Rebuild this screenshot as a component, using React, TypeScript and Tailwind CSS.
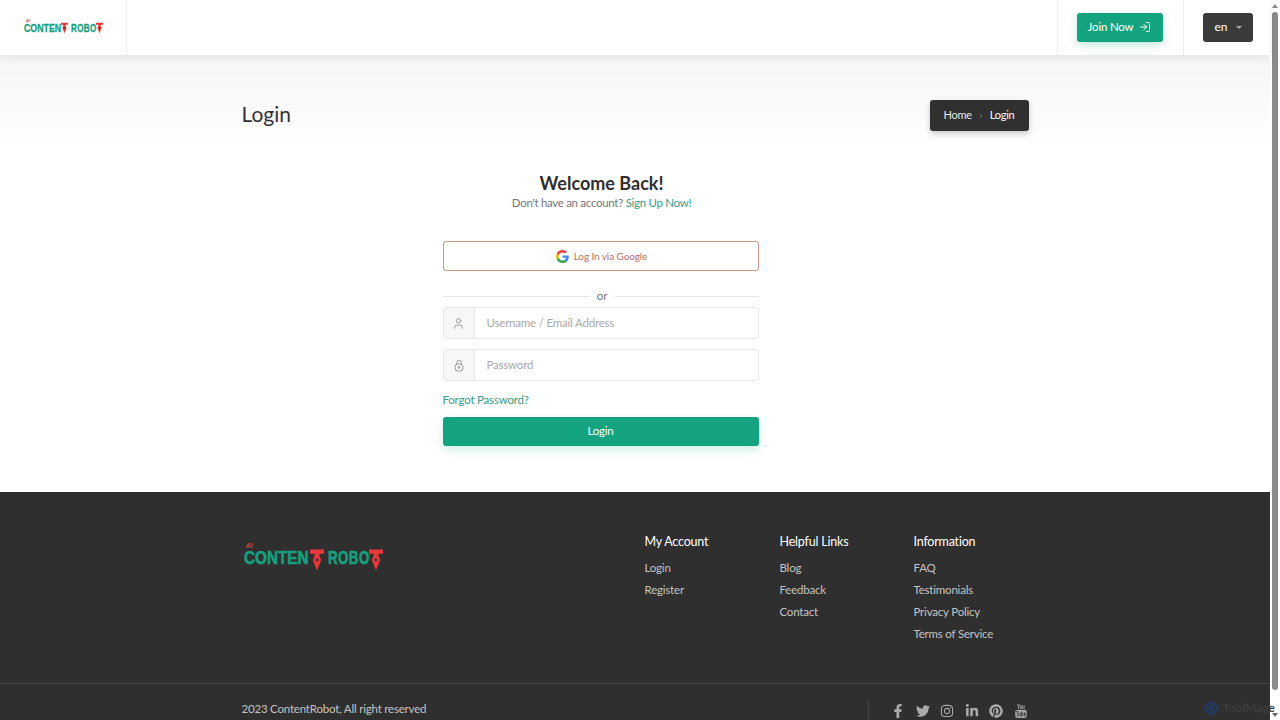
import { ChevronRight, LogIn, User } from "lucide-react";
import {
  FaFacebookF,
  FaInstagram,
  FaLinkedinIn,
  FaPinterest,
  FaTwitter,
} from "react-icons/fa";
import { TfiYoutube } from "react-icons/tfi";

const font = "font-['Lato','Noto_Sans',sans-serif]";

function Nib({ className }: { className: string }) {
  return (
    <svg viewBox="0 0 20 30" className={className}>
      <path d="M0 0h20v6h-6l-1 2 3 7-6 15-6-15 3-7-1-2H0z" fill="#e8393a" />
      <circle cx="10" cy="15" r="2" fill="#2f2f2f" />
    </svg>
  );
}

function Logo({ big }: { big?: boolean }) {
  if (big) {
    return (
      <div className="relative flex items-start font-['Liberation_Sans',sans-serif] font-bold text-[#14a07e]">
        <span className="absolute left-[2px] top-[-7px] text-[7px] italic leading-none text-[#e8393a]">AI</span>
        <span className="w-[66px] origin-left scale-x-[0.85] whitespace-nowrap text-[18px] leading-[18px] [-webkit-text-stroke:0.6px_#14a07e]">
          CONTEN
        </span>
        <Nib className="h-[22px] w-[14px]" />
        <span className="ml-[4px] w-[41px] origin-left scale-x-[0.74] whitespace-nowrap text-[18px] leading-[18px] tracking-[0.6px] [-webkit-text-stroke:0.6px_#14a07e]">
          ROBO
        </span>
        <Nib className="h-[22px] w-[14px]" />
      </div>
    );
  }
  return (
    <div className="relative flex items-start font-['Liberation_Sans',sans-serif] font-bold text-[#14a07e]">
      <span className="absolute left-[2px] top-[-3px] text-[4px] italic leading-none text-[#e8393a]">AI</span>
      <span className="w-[37px] origin-left scale-x-[0.8] whitespace-nowrap text-[11px] leading-[12px] [-webkit-text-stroke:0.3px_#14a07e]">
        CONTEN
      </span>
      <Nib className="h-[12px] w-[7px]" />
      <span className="ml-[3px] w-[25px] origin-left scale-x-[0.74] whitespace-nowrap text-[11px] leading-[12px] tracking-[0.4px] [-webkit-text-stroke:0.3px_#14a07e]">
        ROBO
      </span>
      <Nib className="h-[12px] w-[7px]" />
    </div>
  );
}

function GoogleIcon() {
  return (
    <svg viewBox="0 0 48 48" className="h-[13px] w-[13px]">
      <path fill="#EA4335" d="M24 9.5c3.5 0 6.7 1.2 9.2 3.6l6.9-6.9C35.9 2.4 30.5 0 24 0 14.6 0 6.5 5.4 2.6 13.2l8 6.2C12.5 13.7 17.8 9.5 24 9.5z" />
      <path fill="#4285F4" d="M47 24.5c0-1.6-.1-3.1-.4-4.5H24v9h12.9c-.6 3-2.2 5.5-4.8 7.2l7.7 6c4.5-4.2 7.2-10.3 7.2-17.7z" />
      <path fill="#FBBC05" d="M10.6 28.6c-.5-1.4-.8-3-.8-4.6s.3-3.2.8-4.6l-8-6.2C.9 16.5 0 20.1 0 24s.9 7.5 2.6 10.8l8-6.2z" />
      <path fill="#34A853" d="M24 48c6.5 0 11.9-2.1 15.9-5.8l-7.7-6c-2.2 1.5-4.9 2.3-8.2 2.3-6.2 0-11.5-4.2-13.4-9.9l-8 6.2C6.5 42.6 14.6 48 24 48z" />
    </svg>
  );
}

function LockIcon() {
  return (
    <svg viewBox="0 0 16 20" className="h-[13px] w-[10px]" fill="none" stroke="#8a8a8a" strokeWidth="1.4">
      <path d="M4.5 8V5a3.5 3.5 0 0 1 7 0v3" />
      <rect x="1.5" y="7.5" width="13" height="11.5" rx="5.5" />
      <circle cx="8" cy="13" r="1.6" />
    </svg>
  );
}

function Field({ icon, placeholder }: { icon: React.ReactNode; placeholder: string }) {
  return (
    <div className="flex h-[32px] overflow-hidden rounded-[3px] border border-[#e9e9e9] bg-white">
      <div className="flex w-[31px] items-center justify-center border-r border-[#e9e9e9] bg-[#f7f7f7]">
        {icon}
      </div>
      <div className="flex flex-1 items-center pb-[1px] pl-[12px] text-[11.5px] tracking-[-0.2px] text-[#a9a9a9]">{placeholder}</div>
    </div>
  );
}

function FooterCol({ title, links, width }: { title: string; links: string[]; width: string }) {
  return (
    <div className={width}>
      <h4 className="pt-[1px] text-[12.5px] leading-[18px] tracking-[-0.2px] text-white">{title}</h4>
      <ul className="mt-[6px] flex flex-col text-[11.5px] leading-[22px] tracking-[-0.2px] text-[#c4c4c4]">
        {links.map((l) => (
          <li key={l}>{l}</li>
        ))}
      </ul>
    </div>
  );
}

export default function App() {
  return (
    <div className={`relative flex h-screen overflow-hidden bg-white ${font}`}>
      <div className="min-w-0 flex-1">
        <header className="relative z-10 flex h-[55px] bg-white shadow-[0_2px_8px_rgba(0,0,0,0.08)]">
          <div className="flex w-[127px] items-center border-r border-[#ececec] pl-[24px]">
            <Logo />
          </div>
          <div className="flex-1" />
          <div className="flex w-[126px] items-center justify-center border-l border-[#ececec] pr-[2px]">
            <button className="flex h-[29px] w-[86px] items-center justify-center gap-[6px] rounded-[3px] bg-[#13a37e] pb-[1px] text-[11.5px] tracking-[-0.2px] text-white shadow-[0_3px_8px_rgba(19,163,126,0.25)]">
              Join Now <LogIn size={12} />
            </button>
          </div>
          <div className="flex w-[87px] items-center border-l border-[#ececec] pl-[19px]">
            <button className="flex h-[29px] w-[50px] items-center justify-center gap-[8px] rounded-[3px] bg-[#3a3a3a] pb-[1px] text-[12px] text-white">
              en <span className="h-0 w-0 border-x-[3px] border-t-[3px] border-x-transparent border-t-[#aaaaaa]" />
            </button>
          </div>
        </header>

        <div className="h-[95px] bg-gradient-to-b from-[#f5f5f5] to-white">
          <div className="mx-auto flex w-[787px] items-start justify-between pt-[45px]">
            <h1 className="text-[21px] leading-[28px] text-[#333333]">Login</h1>
            <nav className="flex h-[31px] w-[99px] items-center justify-center gap-[5px] rounded-[3px] bg-[#303030] text-[11px] tracking-[-0.25px] text-white shadow-[0_3px_6px_rgba(0,0,0,0.2)]">
              <span className="text-[#e8e8e8]">Home</span>
              <ChevronRight size={8} className="text-[#888888]" />
              <span>Login</span>
            </nav>
          </div>
        </div>

        <div className="mx-auto h-[342px] w-[787px] pl-[201px]">
          <main className="w-[316px] pt-[21px]">
            <div className="pl-[2px] text-center">
              <h2 className="text-[18px] font-bold leading-[24px] text-[#2f2f2f]">Welcome Back!</h2>
              <p className="text-[11.5px] leading-[16px] tracking-[-0.3px] text-[#777777]">
                Don't have an account? <a className="text-[#3b9c86]">Sign Up Now!</a>
              </p>
            </div>
            <button className="mt-[30px] flex h-[30px] w-full items-center justify-center gap-[5px] rounded-[3px] border border-[#c9978d] pl-[2px] text-[10px] tracking-[-0.1px] text-[#bb6f68]">
              <GoogleIcon /> Log In via Google
            </button>
            <div className="mt-[17px] flex items-center gap-[7px] text-[11.5px] leading-[16px] text-[#777777]">
              <span className="h-px flex-1 bg-[#e6e6e6]" />
              or
              <span className="h-px w-[144px] bg-[#e6e6e6]" />
            </div>
            <div className="mt-[3px] flex flex-col gap-[10px]">
              <Field icon={<User size={13} strokeWidth={1.5} className="text-[#8a8a8a]" />} placeholder="Username / Email Address" />
              <Field icon={<LockIcon />} placeholder="Password" />
            </div>
            <a className="mt-[11px] block text-[11.5px] leading-[16px] tracking-[-0.2px] text-[#3b9c86]">Forgot Password?</a>
            <button className="mt-[9px] h-[29px] w-full rounded-[3px] bg-[#13a37e] pb-[1px] text-[11.5px] tracking-[-0.2px] text-white shadow-[0_4px_10px_rgba(19,163,126,0.2)]">
              Login
            </button>
          </main>
        </div>

        <footer className="h-[228px] bg-[#2f2f2f]">
          <div className="mx-auto flex w-[787px] pt-[40px]">
            <div className="w-[403px] pl-[2px] pt-[17px]">
              <Logo big />
            </div>
            <FooterCol title="My Account" width="w-[135px]" links={["Login", "Register"]} />
            <FooterCol title="Helpful Links" width="w-[134px]" links={["Blog", "Feedback", "Contact"]} />
            <FooterCol title="Information" width="w-[115px]" links={["FAQ", "Testimonials", "Privacy Policy", "Terms of Service"]} />
          </div>
          <div className="mt-[38px] border-t border-[#444444]">
            <div className="mx-auto flex w-[787px] justify-between pt-[16px]">
              <p className="text-[11.5px] leading-[18px] tracking-[-0.2px] text-[#c4c4c4]">2023 ContentRobot, All right reserved</p>
              <div className="flex h-[24px] w-[161px] items-start gap-[9.6px] border-l border-[#444444] pl-[22px] pt-[4px] text-[14px] text-[#aaaaaa]">
                <span className="flex w-[15px] shrink-0 justify-center"><FaFacebookF /></span>
                <span className="flex w-[15px] shrink-0 justify-center"><FaTwitter /></span>
                <span className="flex w-[15px] shrink-0 justify-center"><FaInstagram /></span>
                <span className="flex w-[15px] shrink-0 justify-center"><FaLinkedinIn /></span>
                <span className="flex w-[15px] shrink-0 justify-center"><FaPinterest /></span>
                <span className="flex w-[15px] shrink-0 justify-center"><TfiYoutube /></span>
              </div>
            </div>
          </div>
        </footer>
      </div>

      <div className="flex w-[10px] flex-col items-center bg-white">
        <span className="mt-[4px] h-0 w-0 border-x-[3px] border-b-[4px] border-x-transparent border-b-[#8a8a8a]" />
        <span className="mt-[4px] h-[678px] w-[6px] rounded-full bg-[#8a8a8a]" />
        <span className="mb-[3px] mt-auto h-0 w-0 border-x-[3px] border-t-[4px] border-x-transparent border-t-[#666666]" />
      </div>

      <div className="absolute bottom-[3px] right-[5px] flex items-center gap-[4px] text-[12px] font-bold text-[#3d3d3d]">
        <svg viewBox="0 0 20 20" className="h-[15px] w-[15px]" fill="none" stroke="#23395f" strokeWidth="2.5">
          <circle cx="10" cy="10" r="8" />
          <path d="M4 6l12 8M16 6L4 14M10 2v16" />
        </svg>
        ToolMage
      </div>
    </div>
  );
}
